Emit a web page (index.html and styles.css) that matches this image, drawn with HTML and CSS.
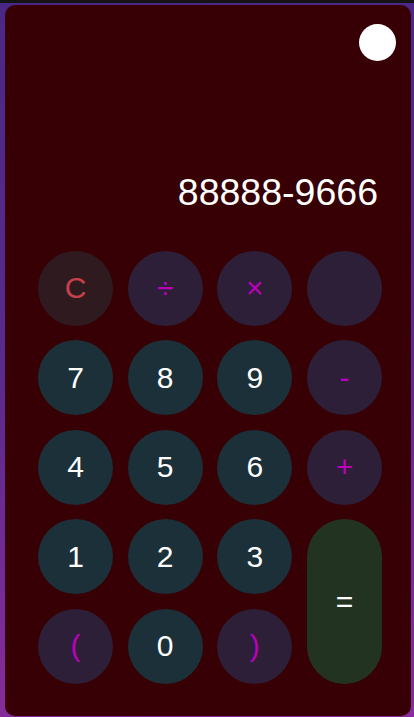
FILE: index.html
```html
<!DOCTYPE html>
<html lang="en">
<head>
<meta charset="utf-8">
<title>Calculator</title>
<link rel="stylesheet" href="styles.css">
</head>
<body>
<main class="calc">
  <div class="toggle"></div>
  <div class="display">88888-9666</div>
  <div class="keys">
    <button class="key clear">C</button>
    <button class="key op">÷</button>
    <button class="key op">×</button>
    <button class="key op"></button>
    <button class="key num">7</button>
    <button class="key num">8</button>
    <button class="key num">9</button>
    <button class="key op">-</button>
    <button class="key num">4</button>
    <button class="key num">5</button>
    <button class="key num">6</button>
    <button class="key op">+</button>
    <button class="key num">1</button>
    <button class="key num">2</button>
    <button class="key num">3</button>
    <button class="key equals">=</button>
    <button class="key op">(</button>
    <button class="key num">0</button>
    <button class="key op">)</button>
  </div>
</main>
</body>
</html>
```
FILE: styles.css
```css
html, body {
  margin: 0;
  height: 100%;
}
body {
  box-sizing: border-box;
  padding: 5px 3px 1px 5px;
  background:
    linear-gradient(#141414, #141414) top left / 100% 3px no-repeat,
    linear-gradient(175deg, #4a2786 0%, #5a2a8e 50%, #8a2c9c 100%);
  font-family: "Liberation Sans", Arial, sans-serif;
  overflow: hidden;
}
.calc {
  box-sizing: border-box;
  height: 100%;
  background: #360004;
  border-radius: 10px;
  display: flex;
  flex-direction: column;
}
.toggle {
  align-self: flex-end;
  width: 37px;
  height: 37px;
  border-radius: 50%;
  background: #ffffff;
  margin: 19px 15px 0 0;
}
.display {
  margin-top: 112.7px;
  padding-right: 33px;
  text-align: right;
  color: #ffffff;
  font-size: 37.5px;
  line-height: 37.5px;
}
.keys {
  margin-top: 39.8px;
  padding-left: 33px;
  display: grid;
  grid-template-columns: repeat(4, 75px);
  grid-auto-rows: 75px;
  column-gap: 14.67px;
  row-gap: 14.5px;
}
.key {
  border: none;
  border-radius: 50%;
  padding: 0;
  margin: 0;
  font-family: "Liberation Sans", Arial, sans-serif;
  font-size: 30px;
  display: flex;
  align-items: center;
  justify-content: center;
}
.num {
  background: #1c3039;
  color: #ffffff;
}
.op {
  background: #2e1f38;
  color: #bb00bb;
}
.clear {
  background: #2f1b1f;
  color: #c8404c;
}
.equals {
  grid-column: 4;
  grid-row: 4 / span 2;
  border-radius: 37.5px;
  background: #223322;
  color: #ffffff;
}
```
